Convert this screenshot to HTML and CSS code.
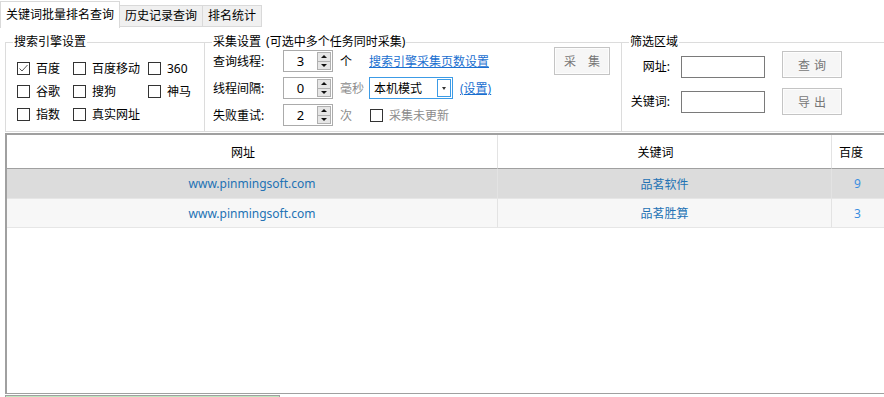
FILE: index.html
```html
<!DOCTYPE html>
<html>
<head>
  <meta charset="utf-8">
  <title>关键词批量排名查询</title>
  <link rel="stylesheet" href="styles.css">
</head>
<body>
  <div class="tabs">
    <div class="tab active">关键词批量排名查询</div>
    <div class="tab">历史记录查询</div>
    <div class="tab">排名统计</div>
  </div>

  <div class="settings">
    <fieldset class="group engines">
      <legend>搜索引擎设置</legend>
      <div class="engine-list">
        <label class="check"><span class="box"><svg width="11" height="11" viewBox="0 0 11 11"><polyline points="1.5,5.5 4,8 9.5,2" fill="none" stroke="#555" stroke-width="1"/></svg></span>百度</label>
        <label class="check"><span class="box"></span>百度移动</label>
        <label class="check"><span class="box"></span>360</label>
        <label class="check"><span class="box"></span>谷歌</label>
        <label class="check"><span class="box"></span>搜狗</label>
        <label class="check"><span class="box"></span>神马</label>
        <label class="check"><span class="box"></span>指数</label>
        <label class="check"><span class="box"></span>真实网址</label>
      </div>
    </fieldset>

    <fieldset class="group collect">
      <legend>采集设置 (可选中多个任务同时采集)</legend>
      <div class="collect-body">
        <div class="collect-rows">
          <div class="row">
            <span class="lbl">查询线程:</span>
            <div class="spin"><span class="spin-val">3</span><span class="spin-btns"><span class="up"></span><span class="down"></span></span></div>
            <span class="unit">个</span>
            <a class="link">搜索引擎采集页数设置</a>
          </div>
          <div class="row">
            <span class="lbl">线程间隔:</span>
            <div class="spin"><span class="spin-val">0</span><span class="spin-btns"><span class="up"></span><span class="down"></span></span></div>
            <span class="unit muted">毫秒</span>
            <div class="combo"><span class="combo-text">本机模式</span><span class="combo-btn"></span></div>
            <a class="link set-link">(设置)</a>
          </div>
          <div class="row">
            <span class="lbl">失败重试:</span>
            <div class="spin"><span class="spin-val">2</span><span class="spin-btns"><span class="up"></span><span class="down"></span></span></div>
            <span class="unit muted">次</span>
            <label class="check muted update"><span class="box"></span>采集未更新</label>
          </div>
        </div>
        <button class="btn collect-btn">采　集</button>
      </div>
    </fieldset>

    <fieldset class="group filter">
      <legend>筛选区域</legend>
      <div class="filter-body">
        <div class="frow first">
          <span class="flbl">网址:</span>
          <input type="text" class="finput">
          <button class="btn fbtn">查 询</button>
        </div>
        <div class="frow">
          <span class="flbl">关键词:</span>
          <input type="text" class="finput">
          <button class="btn fbtn">导 出</button>
        </div>
      </div>
    </fieldset>
  </div>

  <div class="grid">
    <table>
      <colgroup>
        <col class="c-url">
        <col class="c-kw">
        <col class="c-bd">
      </colgroup>
      <tr class="head">
        <th>网址</th>
        <th>关键词</th>
        <th>百度</th>
      </tr>
      <tr class="selected">
        <td>www.pinmingsoft.com</td>
        <td>品茗软件</td>
        <td class="num">9</td>
      </tr>
      <tr class="alt">
        <td>www.pinmingsoft.com</td>
        <td>品茗胜算</td>
        <td class="num">3</td>
      </tr>
    </table>
  </div>

  <div class="progress"></div>
</body>
</html>
```

FILE: styles.css
```css
html, body {
  margin: 0;
  padding: 0;
  overflow: hidden;
  background: #fff;
}

body {
  font-family: "Noto Sans", "Noto Sans CJK SC", sans-serif;
  font-size: 12px;
  color: #000;
  width: 884px;
  height: 397px;
}

/* tabs */
.tabs {
  display: flex;
  align-items: flex-end;
  height: 28px;
}

.tab {
  height: 20px;
  line-height: 20px;
  padding: 0 5px;
  border: 1px solid #d9d9d9;
  background: #f0f0f0;
  margin-bottom: 1px;
  margin-left: -1px;
  white-space: nowrap;
}

.tab.active {
  height: 26px;
  line-height: 25px;
  padding: 0 5px;
  margin: 0;
  border-bottom: none;
  background: #fff;
}

/* group boxes */
.settings {
  display: flex;
  width: 900px;
  padding-top: 8px;
}

fieldset.group {
  margin: 0;
  padding: 0;
  min-width: 0;
  height: 96px;
  box-sizing: border-box;
  border: 1px solid #dcdcdc;
}

fieldset.group legend {
  margin-left: 7px;
  padding: 0 1px;
  line-height: 12px;
  font-size: 12px;
  word-spacing: 2px;
}

.engines {
  margin-left: 5px !important;
  width: 200px;
}

.collect {
  margin-left: -1px !important;
  width: 418px;
}

.filter {
  margin-left: -1px !important;
  flex: 1;
}

/* checkboxes */
.engine-list {
  display: grid;
  grid-template-columns: 56px 75px auto;
  grid-auto-rows: 23px;
  padding: 9px 0 0 11px;
}

.check {
  display: flex;
  align-items: center;
  gap: 6px;
  line-height: 23px;
  white-space: nowrap;
}

.box {
  width: 13px;
  height: 13px;
  box-sizing: border-box;
  border: 1px solid #333;
  background: #fff;
  display: flex;
  align-items: center;
  justify-content: center;
}

/* collect settings */
.collect-body {
  display: flex;
  padding-left: 8px;
}

.collect-rows {
  display: flex;
  flex-direction: column;
  gap: 1px;
}

.row {
  display: flex;
  align-items: center;
  height: 26px;
  white-space: nowrap;
}

.lbl {
  width: 70px;
}

.spin {
  display: flex;
  width: 50px;
  height: 22px;
  box-sizing: border-box;
  border: 1px solid #ababab;
  background: #fff;
}

.spin-val {
  flex: 1;
  text-align: center;
  line-height: 20px;
  font-size: 13px;
}

.spin-btns {
  display: flex;
  flex-direction: column;
  width: 14px;
  margin: 1px 1px 1px 0;
}

.spin-btns span {
  flex: 1;
  box-sizing: border-box;
  border: 1px solid #b0b0b0;
  background: #e6e6e6;
  display: flex;
  align-items: center;
  justify-content: center;
}

.spin-btns .down {
  margin-top: -1px;
}

.spin-btns .up::after,
.spin-btns .down::after {
  content: "";
  border-left: 3px solid transparent;
  border-right: 3px solid transparent;
}

.spin-btns .up::after {
  border-bottom: 3px solid #111;
}

.spin-btns .down::after {
  border-top: 3px solid #111;
}

.unit {
  width: 29px;
  margin-left: 7px;
}

.muted {
  color: #8c8c8c;
}

.link {
  color: #1a6fd0;
  text-decoration: underline;
  cursor: pointer;
}

.set-link {
  margin-left: 7px;
}

.combo {
  display: flex;
  align-items: center;
  width: 84px;
  height: 22px;
  box-sizing: border-box;
  border: 1px solid #3c9be6;
}

.combo-text {
  flex: 1;
  padding-left: 4px;
}

.combo-btn {
  width: 14px;
  height: 18px;
  box-sizing: border-box;
  border: 1px solid #3c9be6;
  margin-right: 1px;
  display: flex;
  align-items: center;
  justify-content: center;
}

.combo-btn::after {
  content: "";
  border-left: 2px solid transparent;
  border-right: 2px solid transparent;
  border-top: 3px solid #333;
}

.update {
  margin-left: 1px;
}

/* buttons */
.btn {
  font-family: "Noto Sans", "Noto Sans CJK SC", sans-serif;
  font-size: 12px;
  color: #777;
  background: #f6f6f6;
  border: 1px solid #c4c4c4;
  box-shadow: inset 0 0 0 1px #fdfdfd;
  padding: 0;
}

.collect-btn {
  margin: -1px 11px 0 auto;
  width: 56px;
  height: 28px;
}

/* filter */
.filter-body {
  display: flex;
  flex-direction: column;
  gap: 10px;
  padding-top: 3px;
}

.frow {
  display: flex;
  align-items: center;
  height: 27px;
}

.frow.first {
  align-items: flex-end;
}

.flbl {
  width: 48px;
  text-align: right;
  line-height: 22px;
  margin-right: 11px;
  white-space: nowrap;
}

.finput {
  width: 84px;
  height: 22px;
  box-sizing: border-box;
  border: 1px solid #7a7a7a;
  margin: 0;
  padding: 0 3px;
}

.fbtn {
  margin-left: 17px;
  width: 60px;
  height: 27px;
  align-self: flex-start;
  word-spacing: 1px;
}

.frow:not(.first) .fbtn {
  align-self: center;
}

/* result grid */
.grid {
  margin: 1px 0 0 5px;
  width: 890px;
  height: 261px;
  box-sizing: border-box;
  border-top: 2px solid #a0a0a0;
  border-left: 2px solid #a0a0a0;
  border-bottom: 1px solid #a0a0a0;
  overflow: hidden;
}

table {
  width: 882px;
  table-layout: fixed;
  border-collapse: separate;
  border-spacing: 0;
}

.c-url { width: 491px; }
.c-kw { width: 334px; }
.c-bd { width: 57px; }

th, td {
  padding: 0;
  text-align: center;
  border-right: 1px solid #e3e3e3;
  white-space: nowrap;
  overflow: hidden;
}

th {
  height: 33px;
  font-weight: normal;
  padding-right: 18px;
  border-bottom: 1px solid #a0a0a0;
}

td {
  color: #2372b4;
  border-bottom: 1px solid #e6e6e6;
}

td.num {
  color: #3b8ee0;
  padding-right: 5px;
}

tr.selected td {
  height: 29px;
  background: #dcdcdc;
}

tr.alt td {
  height: 28px;
  background: #f7f7f7;
}

.progress {
  margin: 1px 0 0 5px;
  width: 273px;
  height: 6px;
  border: 1px solid #a0a0a0;
  background: #bfe8bf;
}
```
